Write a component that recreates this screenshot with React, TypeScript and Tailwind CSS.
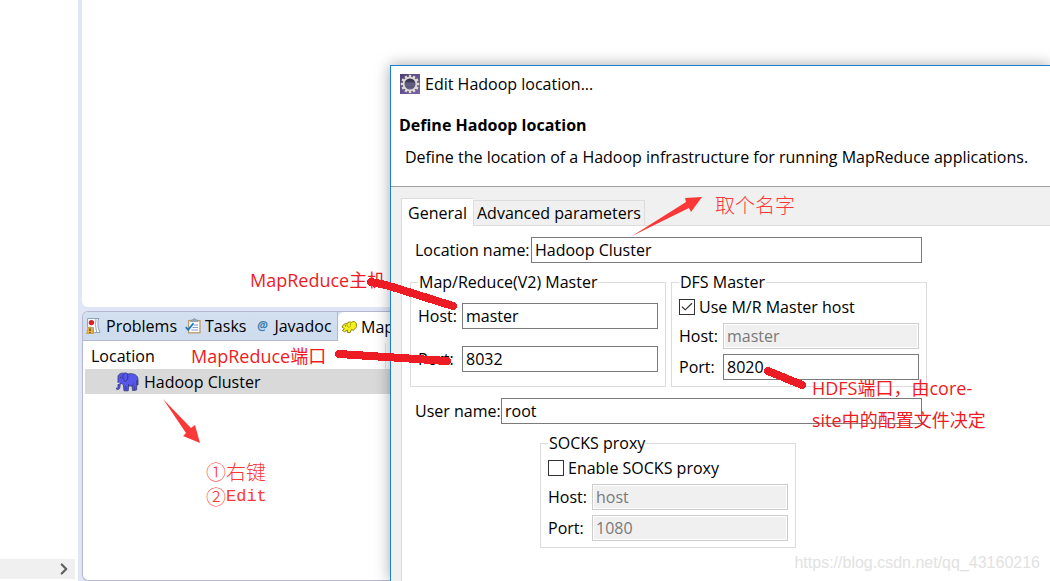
import type { InputHTMLAttributes, ReactNode } from 'react'
import { Check, ChevronRight } from 'lucide-react'

const ELEPHANT_BODY =
	'M3 5 C3 2 6 0.8 9 1.2 C11 0.6 12 1.2 13 2 C17 1 21 2.2 22.4 5 C23.4 7.5 23 10.5 23 13 L22.2 13 L21.8 8.5 L21.6 18 L17.6 18.6 L17 14 L13.6 14 L13.2 18.8 L9 18.8 L8.4 12.6 L5.4 11 L4.8 15.6 C4.4 17.6 2.4 18.2 1 16.6 L1.8 16 C2.6 16.4 3 15.8 3 14.8 Z'

// Smaller running elephant used on the view tab
const ELEPHANT_RUNNING =
	'M1 7 C2 4.4 4 3.4 6 3.6 C7.4 1.6 9.6 1.8 10.4 2.4 C12.6 0.6 15.4 1.6 15.4 5 C15.6 7.4 14.6 8.6 13.6 8.8 L12.4 10.4 L10.4 9.4 L9 12.8 L6.4 12.4 L6.4 10 L3.6 11.8 L1.4 10.4 L3.4 8.6 Z'

function ElephantIcon() {
	return (
		<svg viewBox="0 0 24 20" className="h-5 w-6 shrink-0" aria-hidden="true">
			<path d={ELEPHANT_BODY} fill="#5656ea" stroke="#33337c" strokeWidth="0.8" strokeLinejoin="round" />
			<path d="M8.5 2 C7 5 8 8.5 10.5 9.5 C13 8 13.4 4.4 12.4 2.2" fill="none" stroke="#33337c" strokeWidth="0.9" />
			<path d="M11 14 V18 M13.5 14 L13.5 12 M17.4 14 L18.4 11.5 M19.6 14 V18" stroke="#33337c" strokeWidth="0.8" />
			<path d="M4.6 11 L1.2 12" stroke="#f3f3f3" strokeWidth="1" />
			<circle cx="5.8" cy="5.4" r="0.7" fill="#33337c" />
		</svg>
	)
}

function RunningElephantIcon() {
	return (
		<svg viewBox="0 0 16 14" className="h-3.5 w-4 shrink-0" aria-hidden="true">
			<path d={ELEPHANT_RUNNING} fill="#f6f01c" stroke="#7c780f" strokeWidth="0.9" strokeLinejoin="round" />
			<path d="M6 3.6 C5.6 6 6.6 7.4 8.4 7.2 C9.8 6.4 10 4 9.4 2.8" fill="none" stroke="#a39e12" strokeWidth="0.8" />
			<circle cx="4.4" cy="5.8" r="0.6" fill="#4d4a08" />
		</svg>
	)
}

function EclipseIcon() {
	const teeth = Array.from({ length: 12 }, (_, i) => i * 30)
	return (
		<svg viewBox="0 0 20 20" className="size-5 shrink-0" aria-hidden="true">
			<defs>
				<linearGradient id="eclipse-bg" x1="0" y1="0" x2="1" y2="1">
					<stop offset="0" stopColor="#4c4272" />
					<stop offset="1" stopColor="#7a64a4" />
				</linearGradient>
				<linearGradient id="eclipse-core" x1="0" y1="0" x2="0" y2="1">
					<stop offset="0" stopColor="#2b2740" />
					<stop offset="1" stopColor="#6d6892" />
				</linearGradient>
			</defs>
			<rect width="20" height="20" fill="url(#eclipse-bg)" />
			{teeth.map((angle) => (
				<rect key={angle} x="8.8" y="0.8" width="2.4" height="3" fill="#dedbd2" transform={`rotate(${angle} 10 10)`} />
			))}
			<circle cx="10" cy="10" r="6.4" fill="url(#eclipse-core)" stroke="#dedbd2" strokeWidth="1.8" />
			<path d="M5 9.2 H15 M5 11 H15" stroke="#8d88ad" strokeWidth="0.6" />
		</svg>
	)
}

function ProblemsIcon() {
	return (
		<svg viewBox="0 0 16 16" className="size-4 shrink-0" aria-hidden="true">
			<path d="M1.5 0.5 H13 Q11.5 2 12 4.5 Q11 8 14 14.5 H7.5 V9.5 H1.5 Z" fill="#f7f9fc" stroke="#8fa3bd" />
			<path d="M10 1 Q8.6 6 10.6 14" fill="none" stroke="#9aabc2" />
			<circle cx="5.4" cy="4.6" r="2.7" fill="#d9202c" />
			<path d="M0.6 15.5 L2 10 Q4 7.6 6 10 L7.6 15.5 Z" fill="#f0b54a" stroke="#c98a2a" strokeWidth="0.7" />
			<path d="M4 10.5 V13 M4 14 V15" stroke="#4a2c00" strokeWidth="1.2" />
		</svg>
	)
}

function TasksIcon() {
	return (
		<svg viewBox="0 0 16 16" className="size-4 shrink-0" aria-hidden="true">
			<rect x="3.6" y="2.6" width="11.4" height="12.2" fill="#fff" stroke="#b99a6b" strokeWidth="1.3" />
			<path d="M5.5 3.6 Q6 1.6 8 1.6 Q9.4 -0.6 10.8 1.6 Q12.6 1.6 13 3.6 Z" fill="#98a6bb" stroke="#75869f" strokeWidth="0.6" />
			<path d="M8.5 7 H13 M7.5 9.5 H13 M6.5 12 H13" stroke="#7f9cc6" />
			<path d="M0.8 9.2 L3.2 11.8 L8.4 5.2" fill="none" stroke="#1778c4" strokeWidth="1.8" />
		</svg>
	)
}

function ViewTab({ icon, label }: { icon: ReactNode; label: string }) {
	return (
		<button type="button" className="flex h-full shrink-0 items-center gap-1 whitespace-nowrap">
			{icon}
			{label}
		</button>
	)
}

function TextField({ id, label, labelClass, ...rest }: {
	id: string
	label: string
	labelClass?: string
} & InputHTMLAttributes<HTMLInputElement>) {
	return (
		<div className="flex h-[26px] items-center">
			<label htmlFor={id} className={labelClass ?? 'w-11 shrink-0'}>
				{label}
			</label>
			<input
				id={id}
				type="text"
				className="h-full w-full min-w-0 flex-1 border border-[#7a7a7a] bg-white px-[3px] outline-none disabled:border-[#cccccc] disabled:bg-[#f0f0f0] disabled:text-[#7a7a7a] disabled:shadow-[inset_0_0_0_1px_white]"
				{...rest}
			/>
		</div>
	)
}

function CheckField({ id, label, checked }: { id: string; label: string; checked?: boolean }) {
	return (
		<div className="flex h-[22px] items-center gap-1">
			<span className="relative size-4 shrink-0">
				<input
					id={id}
					type="checkbox"
					defaultChecked={checked}
					className="peer block size-4 appearance-none border border-[#333333] bg-white"
				/>
				<Check
					size={14}
					strokeWidth={2}
					className="pointer-events-none absolute top-px left-px hidden text-[#333333] peer-checked:block"
				/>
			</span>
			<label htmlFor={id}>{label}</label>
		</div>
	)
}

function Group({ title, className, children }: { title: string; className: string; children: ReactNode }) {
	return (
		<fieldset className={`w-64 border border-[#dcdcdc] px-[7px] ${className}`}>
			<legend className="px-px leading-[22px]">{title}</legend>
			{children}
		</fieldset>
	)
}

function Workbench() {
	return (
		<div className="flex min-h-screen bg-[#e1e6f6]">
			<div className="flex w-[78px] shrink-0 flex-col justify-end bg-white pr-[3px] pb-0.5">
				<div className="flex h-5 items-center justify-end bg-[#f0f0f0] pr-0.5">
					<ChevronRight size={18} strokeWidth={3} className="text-[#606060]" />
				</div>
			</div>
			<div className="ml-1 flex min-w-0 flex-1 flex-col gap-1">
				<div className="h-[307px] shrink-0 rounded-bl-md bg-white" />
				<div className="flex flex-1 flex-col overflow-hidden rounded-l-md border border-r-0 border-[#b4b7cf] bg-white">
					<div className="flex h-[29px] shrink-0 bg-linear-to-b from-[#d3e0ef] to-[#cddcee]">
						<div className="flex w-[255px] shrink-0 items-center gap-2 border-r border-b border-[#b4b7cf] pl-[3px]">
							<ViewTab icon={<ProblemsIcon />} label="Problems" />
							<ViewTab icon={<TasksIcon />} label="Tasks" />
							<ViewTab
								icon={<span className="w-4 text-center text-xs font-bold text-[#3f7fae] italic">@</span>}
								label="Javadoc"
							/>
						</div>
						<div className="flex-1 rounded-tl-md bg-white pl-[3px]">
							<ViewTab icon={<RunningElephantIcon />} label="Map" />
						</div>
					</div>
					<div className="pt-0.5 pl-0.5">
						<table className="w-full border-collapse text-left">
							<thead>
								<tr className="h-[26px]">
									<th className="w-[300px] border-r border-[#e5e5e5] p-0 pl-1.5 font-normal">Location</th>
									<th className="p-0" />
								</tr>
							</thead>
							<tbody>
								<tr className="h-[25px] bg-[#d9d9d9]">
									<td colSpan={2} className="p-0 pl-[30px]">
										<span className="flex items-center gap-[5px]">
											<ElephantIcon />
											Hadoop Cluster
										</span>
									</td>
								</tr>
							</tbody>
						</table>
					</div>
				</div>
			</div>
		</div>
	)
}

function LocationDialog() {
	return (
		<section
			aria-label="Edit Hadoop location"
			className="absolute top-[65px] right-0 bottom-0 left-[390px] flex flex-col overflow-hidden border-t border-l border-[#1a7fd0] bg-[#f0f0f0] shadow-[0_0_14px_rgba(0,0,0,0.35)]"
		>
			<header className="border-b border-[#a0a0a0] bg-white pt-2 pl-2">
				<div className="flex h-5 items-center gap-[5px] pl-px">
					<EclipseIcon />
					<span>Edit Hadoop location...</span>
				</div>
				<h1 className="mt-5 leading-[22px] font-bold">Define Hadoop location</h1>
				<p className="mt-2.5 mb-[18px] pl-1.5 leading-[22px] whitespace-nowrap">
					Define the location of a Hadoop infrastructure for running MapReduce applications.
				</p>
			</header>

			<div className="flex flex-1 flex-col pt-[11px] pl-2.5">
				<div role="tablist" className="flex items-end">
					<button
						type="button"
						role="tab"
						aria-selected="true"
						className="h-7 w-[72px] border-t border-l border-[#dcdcdc] bg-white text-center"
					>
						General
					</button>
					<button
						type="button"
						role="tab"
						aria-selected="false"
						className="h-[26px] border border-[#dcdcdc] px-[3px] whitespace-nowrap"
					>
						Advanced parameters
					</button>
					<div className="h-px flex-1 bg-[#dcdcdc]" />
				</div>

				<form className="flex-1 border-l border-[#dcdcdc] bg-white pt-[11px] pl-2">
					<div className="w-[517px]">
						<div className="px-[5px]">
							<TextField id="location" label="Location name:" labelClass="w-[116px] shrink-0 whitespace-nowrap" defaultValue="Hadoop Cluster" />
						</div>
						<div className="mt-2 flex gap-[5px]">
							<Group title="Map/Reduce(V2) Master" className="pt-2.5 pb-[13px]">
								<div className="flex flex-col gap-[17px]">
									<TextField id="mr-host" label="Host:" defaultValue="master" />
									<TextField id="mr-port" label="Port:" defaultValue="8032" />
								</div>
							</Group>
							<Group title="DFS Master" className="pt-[3px] pb-1.5">
								<div className="flex flex-col gap-[5px]">
									<CheckField id="use-mr" label="Use M/R Master host" checked />
									<TextField id="dfs-host" label="Host:" defaultValue="master" disabled />
									<TextField id="dfs-port" label="Port:" defaultValue="8020" />
								</div>
							</Group>
						</div>
						<div className="mt-[11px] px-[5px]">
							<TextField id="user" label="User name:" labelClass="w-[86px] shrink-0 whitespace-nowrap" defaultValue="root" />
						</div>
						<div className="mt-2 pl-[130px]">
							<Group title="SOCKS proxy" className="pt-[3px] pb-1.5">
								<div className="flex flex-col gap-[5px]">
									<CheckField id="socks" label="Enable SOCKS proxy" />
									<TextField id="socks-host" label="Host:" defaultValue="host" disabled />
									<TextField id="socks-port" label="Port:" defaultValue="1080" disabled />
								</div>
							</Group>
						</div>
					</div>
				</form>
			</div>
		</section>
	)
}

// Hand-drawn strokes and arrows that point at the fields
function Marks() {
	return (
		<svg className="pointer-events-none absolute inset-0 size-full" aria-hidden="true">
			<g fill="none" stroke="#ed1c24" strokeWidth="8" strokeLinecap="round" shapeRendering="crispEdges">
				<path d="M371 282 L386 285 L453 306" />
				<path d="M339 354 L386 357 L447 361" />
				<path d="M768 371 L802 385" />
			</g>
			<g fill="#fb3838">
				<path d="M632 236 L686 202 L685 198 L702 197 L691 212 L689 208 Z" />
				<path d="M163 399 L191 428 L195 425 L200 443 L183 436 L186 433 Z" />
			</g>
		</svg>
	)
}

export default function App() {
	return (
		<div className="relative min-h-screen overflow-hidden bg-white font-['Open_Sans','Noto_Sans_CJK_SC',sans-serif] text-base leading-5 text-black">
			<Workbench />
			<div className="absolute top-[266px] left-[250px] text-lg whitespace-nowrap text-[#ed1c24]">MapReduce主机</div>
			<div className="absolute top-[342px] left-[191px] text-lg whitespace-nowrap text-[#ed1c24]">MapReduce端口</div>
			<LocationDialog />
			<Marks />
			<div className="absolute top-[192px] left-[715px] font-['Noto_Sans_CJK_SC',sans-serif] text-xl leading-[25px] font-light text-[#fb3838]">
				取个名字
			</div>
			<div className="absolute top-[459px] left-[206px] font-['Noto_Sans_CJK_SC',sans-serif] text-xl leading-[25px] font-light text-[#fb3838]">
				<div>①右键</div>
				<div className="flex">
					②<span className="font-['Liberation_Mono',monospace] text-[17px]">Edit</span>
				</div>
			</div>
			<div className="absolute top-[372px] left-[812px] text-lg leading-8 whitespace-nowrap text-[#ed1c24]">
				HDFS端口，由core-
				<br />
				site中的配置文件决定
			</div>
			<div className="absolute right-2.5 bottom-1.5 font-['Liberation_Sans',sans-serif] text-base text-[#e2e2e2]">
				https://blog.csdn.net/qq_43160216
			</div>
		</div>
	)
}
